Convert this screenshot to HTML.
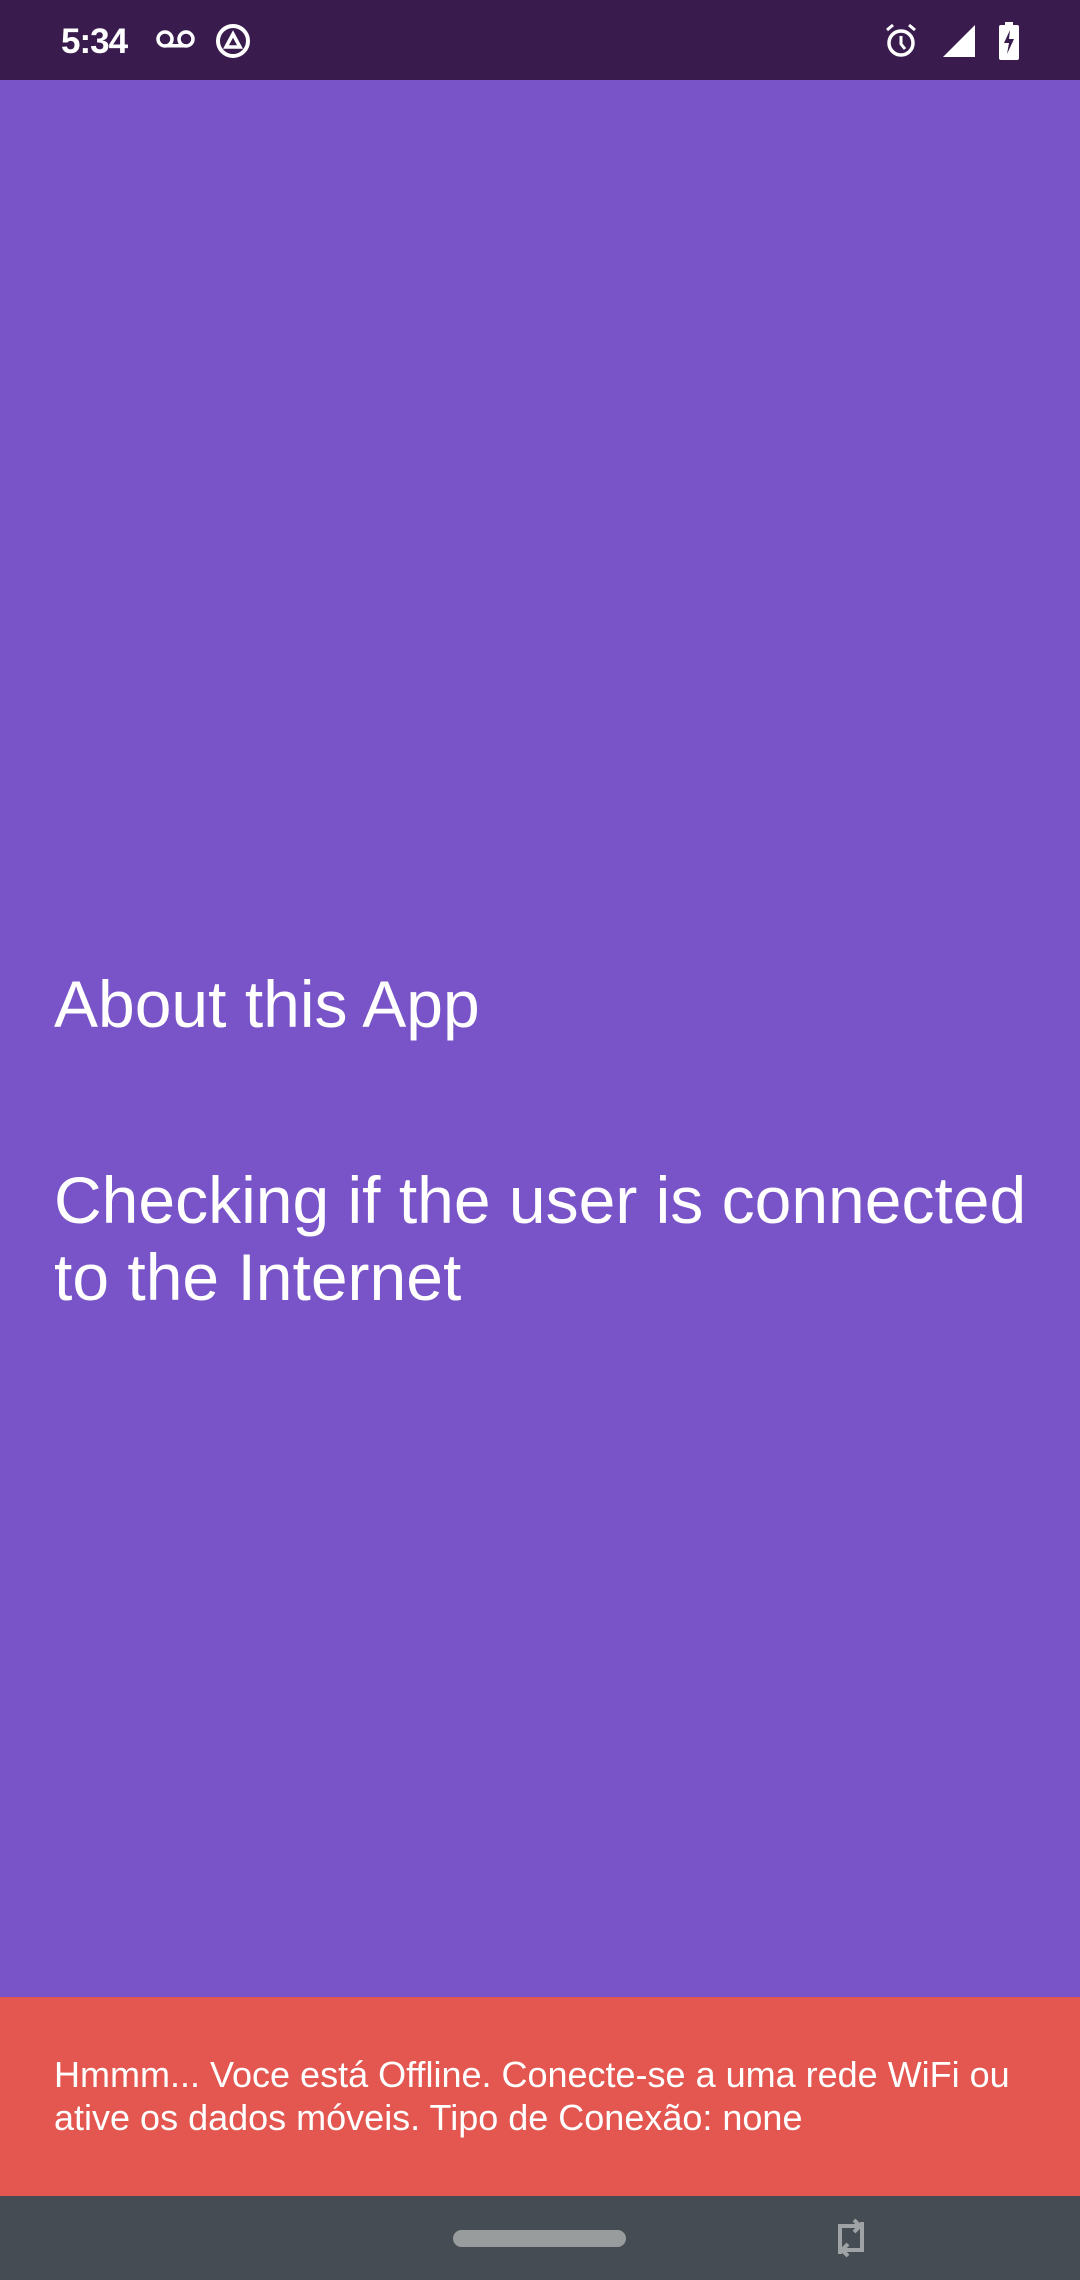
<!DOCTYPE html>
<html><head><meta charset="utf-8"><style>
*{margin:0;padding:0;box-sizing:border-box}
body{width:1080px;height:2280px;overflow:hidden;background:#7954c8;font-family:"Liberation Sans",sans-serif;color:#fff;position:relative}
.sb{position:absolute;left:0;top:0;width:1080px;height:80px;background:#391c4d}
.time{position:absolute;left:61px;top:22px;font-size:35px;font-weight:bold;letter-spacing:-1px}
.t{position:absolute;left:54px;white-space:nowrap;font-size:66px}
.ban{position:absolute;left:0;top:1997px;width:1080px;height:199px;background:#e35750}
.ban p{position:absolute;left:54px;top:56px;font-size:36px;line-height:43px;white-space:nowrap}
.nav{position:absolute;left:0;top:2196px;width:1080px;height:84px;background:#464c53}
.pill{position:absolute;left:453px;top:34px;width:173px;height:17px;border-radius:9px;background:#999c9d}
</style></head><body>
<div class="sb">
<div class="time">5:34</div>
<svg style="position:absolute;left:156px;top:28px" width="40" height="22" viewBox="0 0 40 22"><circle cx="9" cy="11" r="7" fill="none" stroke="#fff" stroke-width="3.5"/><circle cx="30" cy="11" r="7" fill="none" stroke="#fff" stroke-width="3.5"/><rect x="9" y="16" width="21" height="3.5" fill="#fff"/></svg>
<svg style="position:absolute;left:214px;top:22px" width="40" height="38" viewBox="0 0 40 38"><circle cx="19" cy="19" r="15" fill="none" stroke="#fff" stroke-width="4"/><path d="M12 25 L19 12 L26 25 Z" fill="none" stroke="#fff" stroke-width="3.5"/></svg>
<svg style="position:absolute;left:884px;top:22px" width="34" height="38" viewBox="0 0 34 38"><circle cx="17" cy="21" r="12" fill="none" stroke="#fff" stroke-width="3.5"/><path d="M17 14v8l4 5" stroke="#fff" stroke-width="3" fill="none"/><path d="M3 8l6-5M31 8l-6-5" stroke="#fff" stroke-width="3"/></svg>
<svg style="position:absolute;left:942px;top:24px" width="34" height="34" viewBox="0 0 34 34"><path d="M33 1V33H1Z" fill="#fff"/></svg>
<svg style="position:absolute;left:998px;top:22px" width="22" height="38" viewBox="0 0 22 38"><rect x="7" y="0" width="8" height="4" fill="#fff"/><rect x="1" y="3" width="20" height="35" rx="2" fill="#fff"/><path d="M12 8 L6 21 H11 L9 32 L16 17 H11 Z" fill="#391c4d"/></svg>
</div>
<div class="t" style="top:966px">About this App</div>
<div class="t" style="top:1162px;line-height:77px">Checking if the user is connected<br>to the Internet</div>
<div class="ban"><p>Hmmm... Voce está Offline. Conecte-se a uma rede WiFi ou<br>ative os dados móveis. Tipo de Conexão: none</p></div>
<div class="nav"><div class="pill"></div>
<svg style="position:absolute;left:836px;top:18px" width="30" height="48" viewBox="0 0 30 48"><path d="M4 40V12H22M18 6l6 6-6 6" fill="none" stroke="#a0a3a5" stroke-width="4"/><path d="M26 8v28H8M12 30l-6 6 6 6" fill="none" stroke="#a0a3a5" stroke-width="4"/></svg>
</div>
</body></html>
